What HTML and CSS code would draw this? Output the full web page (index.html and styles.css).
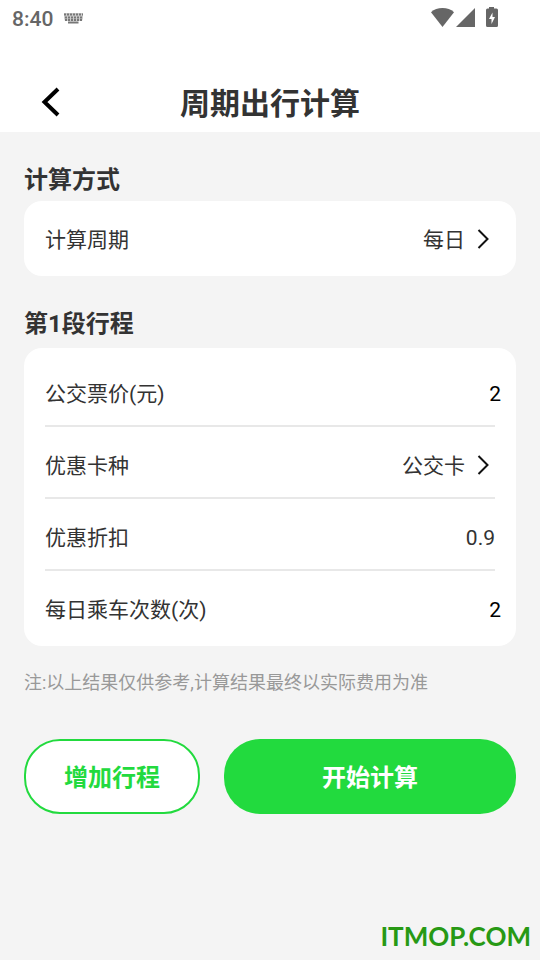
FILE: index.html
```html
<!DOCTYPE html>
<html lang="zh-CN">
<head>
  <meta charset="utf-8">
  <meta name="viewport" content="width=device-width, initial-scale=1">
  <title>周期出行计算</title>
  <link rel="stylesheet" href="styles.css">
</head>
<body>
  <div class="status">
    <span class="status-time">8:40</span>
    <svg class="status-keyboard" width="19" height="11" viewBox="0 0 19 11" aria-hidden="true">
      <path d="M0 0H19V5L18 8H1L0 5Z" fill="#ccc"/>
      <path d="M0 1.500H19M1 4.500H18M1 7H18" stroke="#777" stroke-width="2" stroke-dasharray="2 1" fill="none"/>
      <path d="M4 9.500H14.500" stroke="#777" stroke-width="2"/>
    </svg>
    <svg class="status-icons" width="68" height="20" viewBox="0 0 68 20" fill="#666" aria-hidden="true">
      <path d="M0 5.200C3 2.300 7 1 11.500 1S20 2.300 23 5.200L11.500 20Z"/>
      <path d="M44 1V20H25Z"/>
      <path fill-rule="evenodd" d="M58 0h5v1.500h2.500a1.500 1.500 0 0 1 1.500 1.500V18.500a1.500 1.500 0 0 1-1.500 1.500h-9A1.500 1.500 0 0 1 55 18.500V3a1.500 1.500 0 0 1 1.500-1.500H58ZM61.500 5.500L58 12h2.500v5L64 10h-2.500Z"/>
    </svg>
  </div>

  <header class="header">
    <button class="back" type="button" aria-label="返回">
      <svg width="20" height="32" viewBox="0 0 20 32" aria-hidden="true">
        <path d="M18 3L4.500 16L18 29" fill="none" stroke="#000" stroke-width="4"/>
      </svg>
    </button>
    <h1 class="title">周期出行计算</h1>
  </header>

  <main class="main">
    <h2 class="section-title">计算方式</h2>
    <div class="card card-single">
      <div class="row">
        <label class="label" for="period">计算周期</label>
        <select class="value" id="period"><option>每日</option></select>
        <svg class="chevron" width="12" height="20" viewBox="0 0 12 20" aria-hidden="true"><path d="M1.500 1L10.500 10L1.500 19"/></svg>
      </div>
    </div>

    <h2 class="section-title">第1段行程</h2>
    <div class="card card-list">
      <div class="row">
        <label class="label" for="fare">公交票价(元)</label>
        <input class="value value-number" id="fare" type="text" inputmode="decimal" value="2">
      </div>
      <div class="row">
        <label class="label" for="card">优惠卡种</label>
        <select class="value" id="card"><option>公交卡</option></select>
        <svg class="chevron" width="12" height="20" viewBox="0 0 12 20" aria-hidden="true"><path d="M1.500 1L10.500 10L1.500 19"/></svg>
      </div>
      <div class="row">
        <span class="label">优惠折扣</span>
        <span class="value">0.9</span>
      </div>
      <div class="row">
        <label class="label" for="rides">每日乘车次数(次)</label>
        <input class="value value-number" id="rides" type="text" inputmode="numeric" value="2">
      </div>
    </div>

    <p class="note">注:以上结果仅供参考,计算结果最终以实际费用为准</p>

    <div class="actions">
      <button class="button button-outline" type="button">增加行程</button>
      <button class="button button-solid" type="button">开始计算</button>
    </div>
  </main>

  <footer class="brand">ITMOP.COM</footer>
</body>
</html>
```
FILE: styles.css
```css
* {
  box-sizing: border-box;
}

body {
  margin: 0;
  min-height: 100vh;
  display: flex;
  flex-direction: column;
  background: #f4f4f4;
  color: #333;
  font-family: Roboto, "Noto Sans CJK SC", sans-serif;
  font-size: 21px;
  line-height: 30px;
}

button,
input,
select {
  font: inherit;
  color: inherit;
  margin: 0;
  padding: 0;
  border: 0;
  background: none;
}

.status {
  display: flex;
  align-items: center;
  height: 36px;
  padding: 0 41px 0 12px;
  background: #fff;
  color: #666;
}

.status-time {
  padding-top: 2px;
  font-weight: 500;
}

.status-keyboard {
  margin-left: 11px;
}

.status-icons {
  margin: 0 0 2px auto;
}

.header {
  display: grid;
  grid-template-columns: 60px 1fr 60px;
  align-items: center;
  height: 96px;
  padding: 36px 0 0;
  background: #fff;
}

.back {
  display: flex;
  justify-content: flex-end;
}

.title {
  margin: 0;
  padding-top: 4px;
  font-size: 30px;
  line-height: 44px;
  font-weight: 700;
  text-align: center;
}

.main {
  flex: 1;
  padding: 0 24px;
}

.section-title {
  margin: 30px 0 3px;
  font-size: 24px;
  line-height: 36px;
  font-weight: 700;
}

.card {
  border-radius: 18px;
  background: #fff;
}

.card-single {
  padding: 0 21px 3px;
}

.card-list {
  margin-top: 6px;
  padding: 7px 21px 3px;
}

.row {
  display: flex;
  align-items: center;
  height: 72px;
  padding-top: 6px;
  border-bottom: 2px solid #e8e8e8;
}

.row:last-child {
  border-bottom-color: transparent;
}

.label {
  flex: 1;
  padding-top: 2px;
}

.value {
  padding-top: 2px;
  text-align: right;
}

select.value {
  appearance: none;
  field-sizing: content;
}

.value-number {
  width: 120px;
  height: 32px;
  margin-right: -6px;
  color: #000;
}

.chevron {
  margin: 0 6px 0 12px;
  fill: none;
  stroke: #111;
  stroke-width: 2;
}

.note {
  margin: 23px 0 0;
  color: #999;
  font-size: 18px;
  line-height: 27px;
}

.actions {
  display: grid;
  grid-template-columns: 176fr 292fr;
  gap: 24px;
  margin-top: 43px;
}

.button {
  height: 75px;
  padding-top: 2px;
  border-radius: 36px;
  font-size: 24px;
  font-weight: 700;
}

.button-outline {
  border: 2px solid #22da3e;
  background: #fff;
  color: #22da3e;
}

.button-solid {
  background: #22da3e;
  color: #fff;
}

.brand {
  padding: 0 9px 7px;
  color: #279914;
  font-family: Lato, sans-serif;
  font-size: 26px;
  line-height: 34px;
  font-weight: 700;
  text-align: right;
}
```
